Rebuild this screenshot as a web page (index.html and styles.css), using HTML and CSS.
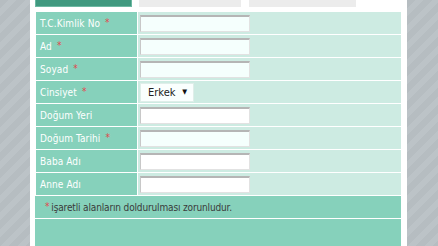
FILE: index.html
```html
<!DOCTYPE html>
<html lang="tr">
<head>
    <meta charset="UTF-8">
    <title>Kayıt Formu</title>
    <link rel="stylesheet" href="styles.css">
</head>
<body>
    <div class="page">
        <div class="side"></div>

        <div class="content">
            <!-- sekmeler -->
            <div class="tabs">
                <div class="tab active"></div>
                <div class="tab"></div>
                <div class="tab wide"></div>
            </div>

            <!-- kimlik bilgileri -->
            <div class="form">
                <div class="label">T.C.Kimlik No <span class="req">*</span></div>
                <div class="value"><input type="text" class="req-input"></div>

                <div class="label">Ad <span class="req">*</span></div>
                <div class="value"><input type="text" class="req-input"></div>

                <div class="label">Soyad <span class="req">*</span></div>
                <div class="value"><input type="text" class="req-input"></div>

                <div class="label">Cinsiyet <span class="req">*</span></div>
                <div class="value">
                    <div class="select"><span>Erkek</span><span class="arrow">&#9660;</span></div>
                </div>

                <div class="label">Doğum Yeri</div>
                <div class="value"><input type="text"></div>

                <div class="label">Doğum Tarihi <span class="req">*</span></div>
                <div class="value"><input type="text" class="req-input"></div>

                <div class="label">Baba Adı</div>
                <div class="value"><input type="text"></div>

                <div class="label">Anne Adı</div>
                <div class="value"><input type="text"></div>
            </div>

            <div class="note"><span class="req">*</span> işaretli alanların doldurulması zorunludur.</div>
            <div class="footer"></div>
        </div>

        <div class="side"></div>
    </div>
</body>
</html>
```

FILE: styles.css
```css
body {
    margin: 0;
    padding: 0;
    font-family: "DejaVu Sans Condensed", "DejaVu Sans", sans-serif;
    font-size: 10px;
    background: #fff;
}
.page {
    display: flex;
    height: 246px;
    overflow: hidden;
}
.side {
    width: 30px;
    flex-shrink: 0;
    background: repeating-linear-gradient(135deg, #b6bdc1 0, #b6bdc1 6px, #bcc3c7 6px, #bcc3c7 12px);
}
.side:last-child {
    width: 31px;
}
.content {
    flex: 1;
    background: #fff;
    padding-left: 5px;
}
.tabs {
    display: flex;
    height: 7px;
    margin-bottom: 5px;
}
.tab {
    width: 102px;
    margin-right: 8px;
    background: #ececec;
}
.tab.active {
    width: 95px;
    margin-right: 7px;
    background: #40997f;
    border: 1px solid #6cb8a2;
    border-top: none;
}
.tab.wide {
    width: 107px;
}
.form {
    display: grid;
    grid-template-columns: 101px 263px;
    grid-auto-rows: 22px;
    gap: 1px;
    padding-left: 1px;
}
.label {
    background: #86d1bb;
    color: #fff;
    padding-left: 4px;
    display: flex;
    align-items: center;
    letter-spacing: 0.1px;
}
.req {
    color: #e0474c;
    margin-left: 5px;
    position: relative;
    top: -1px;
}
.note .req {
    margin-left: 0;
    margin-right: 2px;
}
.value {
    background: #cdebe2;
    display: flex;
    align-items: center;
    padding-left: 2px;
}
.value input {
    width: 110px;
    height: 17px;
    box-sizing: border-box;
    padding: 0;
    margin: 0;
    background: #fff;
    border: 1px solid #e2e2e2;
    border-top: 2px solid #b5b5b5;
    border-left: 1px solid #c8c8c8;
}
.value input.req-input {
    background: #f5fffd;
}
.select {
    width: 54px;
    height: 19px;
    box-sizing: border-box;
    background: #fafffe;
    border: 1px solid #dfeee9;
    display: flex;
    align-items: center;
    justify-content: space-between;
    padding: 0 6px 0 7px;
    color: #222;
    font-size: 11px;
}
.select .arrow {
    font-size: 7px;
    color: #111;
}
.note {
    width: 356px;
    height: 22px;
    margin-top: 1px;
    background: #86d1bb;
    color: #3a3a3a;
    padding-left: 10px;
    display: flex;
    align-items: center;
    font-size: 10px;
    letter-spacing: -0.15px;
}
.footer {
    width: 366px;
    height: 30px;
    margin-top: 1px;
    background: #86d1bb;
}
```
